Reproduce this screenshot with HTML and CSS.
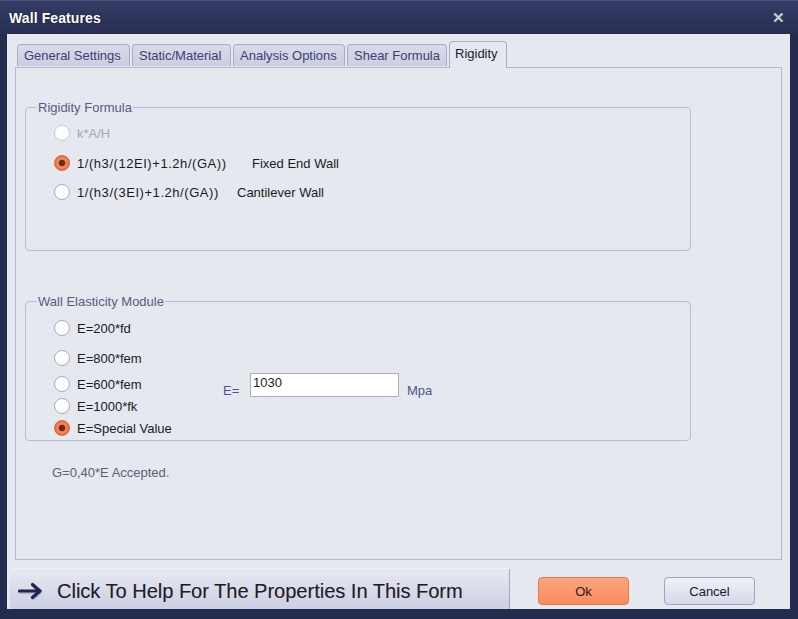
FILE: index.html
```html
<!DOCTYPE html>
<html>
<head>
<meta charset="utf-8">
<title>Wall Features</title>
<link rel="stylesheet" href="styles.css">
</head>
<body>
<div class="window">
  <div class="titlebar">
    <span class="title">Wall Features</span>
    <span class="close">&#x2715;</span>
  </div>
  <div class="client">
    <div class="tabs">
      <div class="tab t1">General Settings</div>
      <div class="tab t2">Static/Material</div>
      <div class="tab t3">Analysis Options</div>
      <div class="tab t4">Shear Formula</div>
      <div class="tab active t5">Rigidity</div>
    </div>
    <div class="panel">
      <fieldset class="group g1">
        <legend>Rigidity Formula</legend>
        <div class="opt r-a disabled"><span class="radio"></span><span>k*A/H</span></div>
        <div class="opt r-b"><span class="radio on"></span><span class="formula f1">1/(h3/(12EI)+1.2h/(GA))</span><span>Fixed End Wall</span></div>
        <div class="opt r-c"><span class="radio"></span><span class="formula f2">1/(h3/(3EI)+1.2h/(GA))</span><span>Cantilever Wall</span></div>
      </fieldset>

      <fieldset class="group g2">
        <legend>Wall Elasticity Module</legend>
        <div class="elastic">
          <div class="opts">
            <div class="opt e1"><span class="radio"></span><span>E=200*fd</span></div>
            <div class="opt e2"><span class="radio"></span><span>E=800*fem</span></div>
            <div class="opt e3"><span class="radio"></span><span>E=600*fem</span></div>
            <div class="opt e4"><span class="radio"></span><span>E=1000*fk</span></div>
            <div class="opt e5"><span class="radio on"></span><span>E=Special Value</span></div>
          </div>
          <div class="evalue">
            <span class="elabel">E=</span>
            <input class="einput" type="text" value="1030">
            <span class="unit">Mpa</span>
          </div>
        </div>
      </fieldset>

      <div class="note">G=0,40*E Accepted.</div>
    </div>
    <div class="bottom">
      <div class="help">
        <svg class="arrow" width="28" height="18" viewBox="0 0 28 18">
          <path d="M2 10.5 H22 M15 4 L22.5 10.5 L15 17" fill="none" stroke="#b9bcd0" stroke-width="3.4" stroke-linecap="round" stroke-linejoin="round"/>
          <path d="M1.5 9 H21.5 M14.5 2.5 L22 9 L14.5 15.5" fill="none" stroke="#1f2450" stroke-width="3.2" stroke-linecap="round" stroke-linejoin="round"/>
        </svg>
        <span class="helptext">Click To Help For The Properties In This Form</span>
      </div>
      <div class="buttons">
        <button class="btn ok">Ok</button>
        <button class="btn cancel">Cancel</button>
      </div>
    </div>
  </div>
</div>
</body>
</html>
```
FILE: styles.css
```css
html, body {
  margin: 0;
  padding: 0;
}
body {
  background: #262c4f;
  font-family: "Liberation Sans", Arial, sans-serif;
  font-size: 13px;
  color: #1b1b1b;
}
.window {
  width: 798px;
  height: 619px;
  background: #252b4e;
  display: flex;
  flex-direction: column;
  box-sizing: border-box;
  border-top: 1px solid #4a527c;
}
.titlebar {
  height: 33px;
  display: flex;
  align-items: center;
  justify-content: space-between;
  padding: 0 13px 0 9px;
  background: linear-gradient(#343c66, #272e52);
}
.title {
  color: #ffffff;
  font-weight: bold;
  font-size: 14px;
  text-shadow: 0 0 2px rgba(0,0,0,0.6);
  letter-spacing: 0.1px;
}
.close {
  color: #c9ccdc;
  font-weight: bold;
  font-size: 15px;
}
.client {
  margin: 0 8px 0 7px;
  height: 575px;
  background: #e6e8ef;
  display: flex;
  flex-direction: column;
}
.tabs {
  display: flex;
  align-items: flex-end;
  gap: 2px;
  padding: 7px 0 0 10px;
  position: relative;
  z-index: 1;
}
.tab {
  height: 22px;
  box-sizing: border-box;
  border: 1px solid #a9adc8;
  border-bottom: none;
  border-radius: 4px 4px 0 0;
  background: linear-gradient(#d9dbea, #cbcee2);
  color: #3b4170;
  display: flex;
  align-items: center;
  padding: 0 6px;
  margin-bottom: 1px;
}
.t1 { width: 113px; }
.t2 { width: 99px; }
.t3 { width: 112px; }
.t4 { width: 100px; }
.t5 { width: 58px; }
.tab.active {
  height: 27px;
  margin-bottom: -1px;
  background: #e6e8ef;
  color: #1b1b2e;
  padding-bottom: 3px;
  padding-left: 5px;
}
.panel {
  margin-left: 8px;
  width: 767px;
  height: 493px;
  box-sizing: border-box;
  border: 1px solid #b3b7d0;
  padding: 32px 0 0 9px;
}
.group {
  margin: 0;
  min-width: 0;
  width: 666px;
  box-sizing: border-box;
  border: 1px solid #b8bbd6;
  border-radius: 4px;
  padding: 0 0 0 11px;
}
.group legend {
  padding: 0 1px;
  color: #565c80;
  line-height: 15px;
}
.g1 { height: 151px; }
.g2 { height: 147px; margin-top: 43px; }
.opt {
  display: flex;
  align-items: center;
  margin-left: 17px;
}
.radio {
  width: 16px;
  height: 16px;
  box-sizing: border-box;
  border-radius: 50%;
  border: 1px solid #a8acc6;
  background: radial-gradient(circle at 50% 40%, #ffffff 55%, #eef0f6);
  margin-right: 7px;
  flex: none;
}
.radio.on {
  border-color: #d9673d;
  background: radial-gradient(circle, #6d2b18 0, #6d2b18 2.8px, #f07c4e 3.6px, #f3885b 5px, #e4683c 7px);
}
.disabled { color: #a2a5b6; }
.disabled .radio { border-color: #c8cbda; }
.r-a { margin-top: 8px; height: 20px; }
.r-b { margin-top: 10px; height: 20px; }
.r-c { margin-top: 9px; height: 20px; }
.formula { letter-spacing: 0.55px; }
.f1 { width: 175px; }
.f2 { width: 160px; }
.elastic {
  display: flex;
}
.opts {
  width: 186px;
}
.e1 { margin-top: 9px; height: 20px; }
.e2 { margin-top: 10px; height: 20px; }
.e3 { margin-top: 6px; height: 20px; }
.e4 { margin-top: 2px; height: 20px; }
.e5 { margin-top: 2px; height: 20px; }
.evalue {
  display: flex;
  align-items: flex-start;
  margin-top: 64px;
}
.elabel {
  color: #4d5688;
  margin-top: 10px;
  width: 27px;
}
.einput {
  width: 149px;
  height: 24px;
  box-sizing: border-box;
  border: 1px solid #a9adc6;
  background: #ffffff;
  font-family: "Liberation Sans", Arial, sans-serif;
  font-size: 13px;
  color: #1b1b1b;
  padding: 0 2px 5px;
  margin: 0;
  outline: none;
}
.unit {
  color: #4d5688;
  margin: 10px 0 0 8px;
}
.note {
  margin: 24px 0 0 27px;
  color: #5b6075;
}
.bottom {
  display: flex;
  align-items: flex-start;
  flex: 1;
}
.help {
  margin: 8px 0 0 3px;
  width: 500px;
  height: 41px;
  box-sizing: border-box;
  border-right: 1px solid #a3a7c2;
  border-top: 1px solid #eef0f6;
  background: linear-gradient(#e7e9f1, #d6d9e8 60%, #cdd0e2);
  display: flex;
  align-items: center;
  padding: 4px 0 0 8px;
  border-radius: 2px 2px 0 0;
}
.arrow {
  margin-right: 11px;
  flex: none;
}
.helptext {
  font-size: 20px;
  color: #1c1c2c;
  text-shadow: 0.5px 0 0 rgba(150,90,30,0.35);
}
.buttons {
  display: flex;
  gap: 35px;
  margin: 17px 0 0 28px;
}
.btn {
  width: 91px;
  height: 28px;
  border-radius: 4px;
  font-family: "Liberation Sans", Arial, sans-serif;
  font-size: 13px;
  color: #1b1b2b;
  padding: 0;
  margin: 0;
}
.ok {
  border: 1px solid #e27a4e;
  background: linear-gradient(#ffa47c, #fb8b5f);
}
.cancel {
  border: 1px solid #9ea3c2;
  background: linear-gradient(#f0f1f7, #d5d8e8);
}
```
